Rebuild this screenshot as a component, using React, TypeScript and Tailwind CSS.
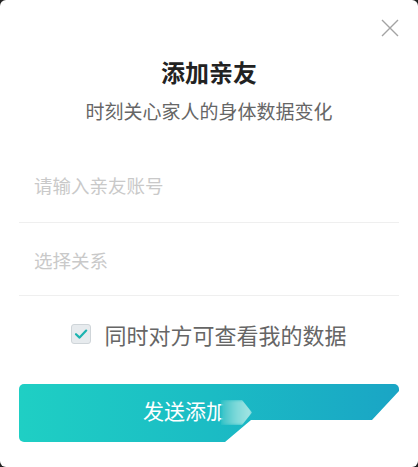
import React from "react";

export default function App() {
  const font = { fontFamily: '"Noto Sans CJK SC", "Noto Sans", sans-serif' };
  return (
    <div className="w-[418px] h-[467px] bg-[#222]" style={font}>
      <div className="w-full h-full bg-white rounded-[6px] flex flex-col">
        <div className="flex justify-end pt-[19px] pr-[19px]">
          <svg width="18" height="18" viewBox="0 0 18 18" fill="none">
            <path d="M1 1L17 17M17 1L1 17" stroke="#a3a3a3" strokeWidth="1.4" />
          </svg>
        </div>
        <div className="mt-[19px] text-center text-[24px] leading-[32px] font-bold text-[#222]">
          添加亲友
        </div>
        <div className="mt-[10px] text-center text-[19px] leading-[26px] text-[#666]">
          时刻关心家人的身体数据变化
        </div>
        <div className="mx-[19px] mt-[26px] flex flex-col">
          <div className="h-[73px] flex items-center border-b border-[#efefef] pl-[15px] text-[18.5px] text-[#c9c9c9]">
            请输入亲友账号
          </div>
          <div className="h-[73px] flex items-center pt-[3px] border-b border-[#efefef] pl-[15px] text-[18.5px] text-[#c9c9c9]">
            选择关系
          </div>
        </div>
        <div className="mt-[25px] flex items-center justify-center gap-[13px]">
          <div className="w-[20px] h-[20px] rounded-[3px] bg-[#e7ebee] border border-[#cfd5d9] flex items-center justify-center">
            <svg width="14" height="14" viewBox="0 0 14 14" fill="none">
              <path d="M2 7.2L5.6 10.6L12.2 3.6" stroke="#1cb3b0" strokeWidth="2.2" strokeLinecap="round" strokeLinejoin="round" />
            </svg>
          </div>
          <span className="text-[22px] leading-[26px] text-[#666]">同时对方可查看我的数据</span>
        </div>
        <div className="mt-[37px] mx-[19px] h-[58px] relative rounded-[5px] overflow-hidden">
          <div className="absolute inset-0 bg-linear-to-r from-[#1fcfc4] via-[#1bbcc4] to-[#1aa5c5] [clip-path:polygon(0_0,100%_0,100%_7px,353px_36px,232px_36px,206px_58px,0_100%)]" />
          <div className="relative h-full flex items-center pl-[124px] pb-[5px] text-[21px] text-white">
            发送添加
          </div>
          <div className="absolute left-[202px] top-[16px] w-[31px] h-[25px] bg-linear-to-r from-[#2fc2c7] via-[#7dd9d9] to-[#a6e6e5] blur-[1.5px] [clip-path:polygon(0_0,68%_0,100%_50%,68%_100%,0_100%)]" />
        </div>
      </div>
    </div>
  );
}
